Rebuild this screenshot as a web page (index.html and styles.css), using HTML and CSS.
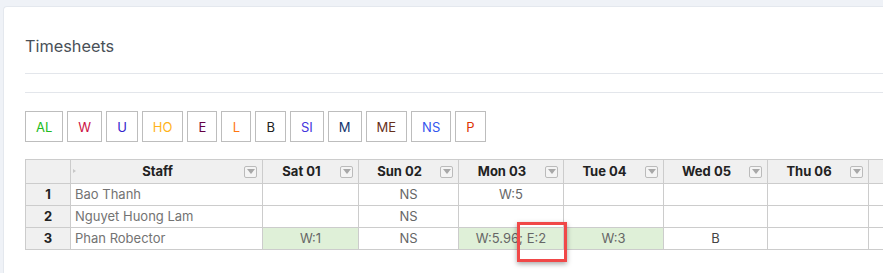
FILE: index.html
```html
<!DOCTYPE html>
<html>
<head>
  <title>Timesheets</title>
  <link rel="stylesheet" href="styles.css">
</head>
<body>
  <div class="page">
    <div class="card">
      <h4 class="card-title">Timesheets</h4>
      <div class="toolbar"></div>

      <div class="legend">
        <button type="button" class="code code-al">AL</button>
        <button type="button" class="code code-w">W</button>
        <button type="button" class="code code-u">U</button>
        <button type="button" class="code code-ho">HO</button>
        <button type="button" class="code code-e">E</button>
        <button type="button" class="code code-l">L</button>
        <button type="button" class="code code-b">B</button>
        <button type="button" class="code code-si">SI</button>
        <button type="button" class="code code-m">M</button>
        <button type="button" class="code code-me">ME</button>
        <button type="button" class="code code-ns">NS</button>
        <button type="button" class="code code-p">P</button>
      </div>

      <div class="grid-wrap">
        <table class="grid">
          <colgroup>
            <col class="col-num">
            <col class="col-staff">
            <col class="col-sat">
            <col class="col-sun">
            <col class="col-mon">
            <col class="col-tue">
            <col class="col-wed">
            <col class="col-thu">
            <col class="col-fri">
          </colgroup>
          <thead>
            <tr>
              <th class="corner"></th>
              <th class="sortable"><span class="sort-mark"></span><div class="head"><span class="head-label">Staff</span><span class="filter-btn"></span></div></th>
              <th><div class="head"><span class="head-label">Sat 01</span><span class="filter-btn"></span></div></th>
              <th><div class="head"><span class="head-label">Sun 02</span><span class="filter-btn"></span></div></th>
              <th><div class="head"><span class="head-label">Mon 03</span><span class="filter-btn"></span></div></th>
              <th><div class="head"><span class="head-label">Tue 04</span><span class="filter-btn"></span></div></th>
              <th><div class="head"><span class="head-label">Wed 05</span><span class="filter-btn"></span></div></th>
              <th><div class="head"><span class="head-label">Thu 06</span><span class="filter-btn"></span></div></th>
              <th><div class="head"><span class="head-label"></span><span class="filter-btn"></span></div></th>
            </tr>
          </thead>
          <tbody>
            <tr>
              <th class="row-num">1</th>
              <td class="name">Bao Thanh</td>
              <td></td>
              <td>NS</td>
              <td>W:5</td>
              <td></td>
              <td></td>
              <td></td>
              <td></td>
            </tr>
            <tr>
              <th class="row-num">2</th>
              <td class="name">Nguyet Huong Lam</td>
              <td></td>
              <td>NS</td>
              <td></td>
              <td></td>
              <td></td>
              <td></td>
              <td></td>
            </tr>
            <tr>
              <th class="row-num">3</th>
              <td class="name">Phan Robector</td>
              <td class="worked">W:1</td>
              <td>NS</td>
              <td class="worked">W:5.96; E:2</td>
              <td class="worked">W:3</td>
              <td class="plain">B</td>
              <td></td>
              <td></td>
            </tr>
          </tbody>
        </table>
        <div class="highlight"></div>
      </div>
    </div>
  </div>
</body>
</html>
```

FILE: styles.css
```css
html, body { margin: 0; overflow: hidden; }
body { background: #eff2f7; font-family: Inter, "Noto Sans", sans-serif; color: #495057; }

.page { padding: 6px 0 0 3px; }
.card { background: #fff; border-top: 1px solid #e4e8ee; border-left: 1px solid #e4e8ee; border-radius: 4px 0 0 0; padding-left: 21px; min-height: 300px; }

.card-title { margin: 0; padding: 29px 0 17px; font-size: 16.3px; line-height: 20px; font-weight: 400; color: #495057; border-bottom: 1px solid #e3e6eb; }
.toolbar { height: 18px; border-bottom: 1px solid #e3e6eb; }

.legend { display: flex; gap: 4px; margin-top: 18px; }
.code { box-sizing: border-box; min-width: 30px; height: 31px; padding: 0 10px; border: 1px solid #bdbdbd; border-radius: 0; background: #fff; font-family: Inter, "Noto Sans", sans-serif; font-size: 13px; cursor: pointer; }
.code-al { color: #22bb22; }
.code-w { color: #cc1144; }
.code-u { color: #3322cc; }
.code-ho { color: #ffb31a; }
.code-e { color: #660044; }
.code-l { color: #ff7711; }
.code-b { color: #222; }
.code-si { color: #4433dd; }
.code-m { color: #12356e; }
.code-me { color: #66301a; }
.code-ns { color: #3355ee; }
.code-p { color: #dd3300; }

.grid-wrap { position: relative; margin-top: 17px; }
.grid { border-collapse: separate; border-spacing: 0; table-layout: fixed; width: 944px; border-top: 1px solid #ccc; border-left: 1px solid #ccc; font-size: 13px; }
.col-num { width: 45px; }
.col-staff { width: 192px; }
.col-sat { width: 96px; }
.col-sun { width: 100px; }
.col-mon { width: 105px; }
.col-tue { width: 100px; }
.col-wed { width: 104px; }
.col-thu { width: 101px; }
.col-fri { width: 100px; }

.grid th, .grid td { border-right: 1px solid #ccc; border-bottom: 1px solid #ccc; padding: 0; white-space: nowrap; overflow: hidden; }
.grid thead th { background: #f0f0f0; color: #222; font-weight: 700; line-height: 23px; }
.grid td { line-height: 21px; text-align: center; color: #666; }
.grid td.name { text-align: left; padding-left: 4px; color: #737373; }
.grid td.worked { background: #dff0d8; }
.grid td.plain { color: #444; }
.row-num { background: #f0f0f0; color: #222; font-weight: 700; text-align: center; line-height: 21px; }

.head { display: flex; align-items: center; }
.head-label { flex: 1; text-align: center; }
.filter-btn { box-sizing: border-box; width: 13px; height: 12px; margin-right: 5px; border: 1px solid #bbb; border-radius: 2px; background: #f4f4f4; display: flex; align-items: center; justify-content: center; }
.filter-btn::after { content: ""; border-left: 4px solid transparent; border-right: 4px solid transparent; border-top: 5px solid #a8a8a8; }

.sortable { position: relative; }
.sort-mark { position: absolute; left: 2px; top: 9px; border-top: 2px solid transparent; border-bottom: 2px solid transparent; border-left: 3px solid #c8c8c8; }

.highlight { position: absolute; left: 492px; top: 63px; width: 50px; height: 40px; box-sizing: border-box; border: 3px solid #f04848; box-shadow: 0 2px 5px rgba(0, 0, 0, 0.35); }
```
